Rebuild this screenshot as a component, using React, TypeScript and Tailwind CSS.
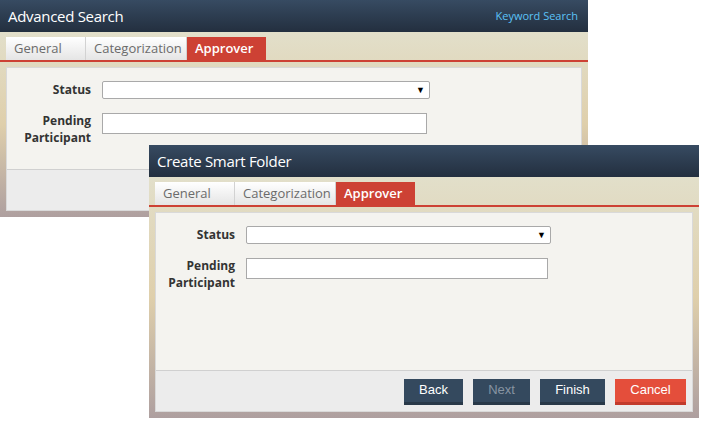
import React from "react";

const tabs = ["General", "Categorization", "Approver"];
const tabWidths = ["w-[80px]", "w-[101px]", "w-[79px]"];

function TabRow() {
  return (
    <div className="flex h-[23px] items-stretch pl-[6px]">
      {tabs.map((t, i) => (
        <div
          key={t}
          className={
            i === 2
              ? `${tabWidths[i]} flex items-center bg-[#cd4134] pl-[8px] text-[13px] font-semibold text-white`
              : `${tabWidths[i]} flex items-center border-r border-[#d2d2d2] bg-gradient-to-b from-white to-[#e5e5e5] pl-[8px] text-[13px] text-[#6b6b6b]`
          }
        >
          {t}
        </div>
      ))}
    </div>
  );
}

function Fields({ labelW, selectW, inputW }: { labelW: string; selectW: string; inputW: string }) {
  return (
    <div className="flex flex-col gap-[15px]">
      <div className="flex items-center">
        <div className={`${labelW} pr-[11px] text-right text-[12px] font-bold text-[#333]`}>Status</div>
        <div
          className={`${selectW} flex h-[18px] items-center justify-end rounded-[2px] border border-[#a9a9a9] bg-white pr-[4px] text-[9px] text-black`}
        >
          ▼
        </div>
      </div>
      <div className="flex items-start">
        <div className={`${labelW} mt-[-2px] pr-[11px] text-right text-[12px] font-bold leading-[17px] text-[#333]`}>
          <div>Pending</div>
          <div>Participant</div>
        </div>
        <div className={`${inputW} mt-[-1px] h-[21px] border border-[#a9a9a9] bg-white`} />
      </div>
    </div>
  );
}

function Window({
  title,
  right,
  contentH,
  labelW,
  selectW,
  inputW,
  footer,
  className,
}: {
  title: string;
  right?: React.ReactNode;
  contentH: string;
  labelW: string;
  selectW: string;
  inputW: string;
  footer?: React.ReactNode;
  className: string;
}) {
  return (
    <div className={`absolute flex flex-col ${className}`} style={{ fontFamily: "'Open Sans', 'Noto Sans', sans-serif" }}>
      <div className="flex h-[32px] items-center justify-between bg-gradient-to-b from-[#374b62] to-[#232f3f] pl-[8px] pr-[10px]">
        <span className="text-[15px] tracking-[-0.3px] text-white">{title}</span>
        {right}
      </div>
      <div className="flex flex-col bg-gradient-to-b from-[#e2dfca] via-[#dfcfab] to-[#ae9f9f] pb-[6px]">
        <div className="pt-[5px]">
          <TabRow />
        </div>
        <div className="h-[2px] bg-[#cd4134]" />
        <div className="mx-[6px] mt-[5px] flex flex-col border border-[#d9d9d9]">
          <div className={`${contentH} bg-[#f4f3ef] pt-[13px]`}>
            <Fields labelW={labelW} selectW={selectW} inputW={inputW} />
          </div>
          <div className="flex h-[41px] items-center justify-end gap-[10px] border-t border-[#d0d0d0] bg-[#ececec] pr-[6px] pt-[1px]">
            {footer}
          </div>
        </div>
      </div>
    </div>
  );
}

function Btn({ label, w, tone }: { label: string; w: string; tone: "navy" | "dim" | "red" }) {
  const c =
    tone === "red"
      ? "bg-[#e44e3b] border-[#c23a2c] text-white"
      : tone === "dim"
        ? "bg-[#34495e] border-[#293949] text-[#8794a2]"
        : "bg-[#34495e] border-[#293949] text-white";
  return (
    <div
      className={`${w} ${c} flex h-[26px] items-center justify-center border-b-[3px] text-[13px]`}
      style={{ fontFamily: "'Liberation Sans', Arial, sans-serif" }}
    >
      {label}
    </div>
  );
}

export default function App() {
  return (
    <div className="relative h-[422px] w-[717px] overflow-hidden bg-white">
      <Window
        className="left-0 top-0 w-[588px]"
        title="Advanced Search"
        right={<span className="text-[11px] text-[#5cc3f7]">Keyword Search</span>}
        contentH="h-[101px]"
        labelW="w-[95px]"
        selectW="w-[328px]"
        inputW="w-[325px]"
      />
      <Window
        className="left-[149px] top-[145px] w-[550px]"
        title="Create Smart Folder"
        contentH="h-[157px]"
        labelW="w-[90px]"
        selectW="w-[305px]"
        inputW="w-[302px]"
        footer={
          <>
            <Btn label="Back" w="w-[59px]" tone="navy" />
            <Btn label="Next" w="w-[57px]" tone="dim" />
            <Btn label="Finish" w="w-[65px]" tone="navy" />
            <Btn label="Cancel" w="w-[71px]" tone="red" />
          </>
        }
      />
    </div>
  );
}
